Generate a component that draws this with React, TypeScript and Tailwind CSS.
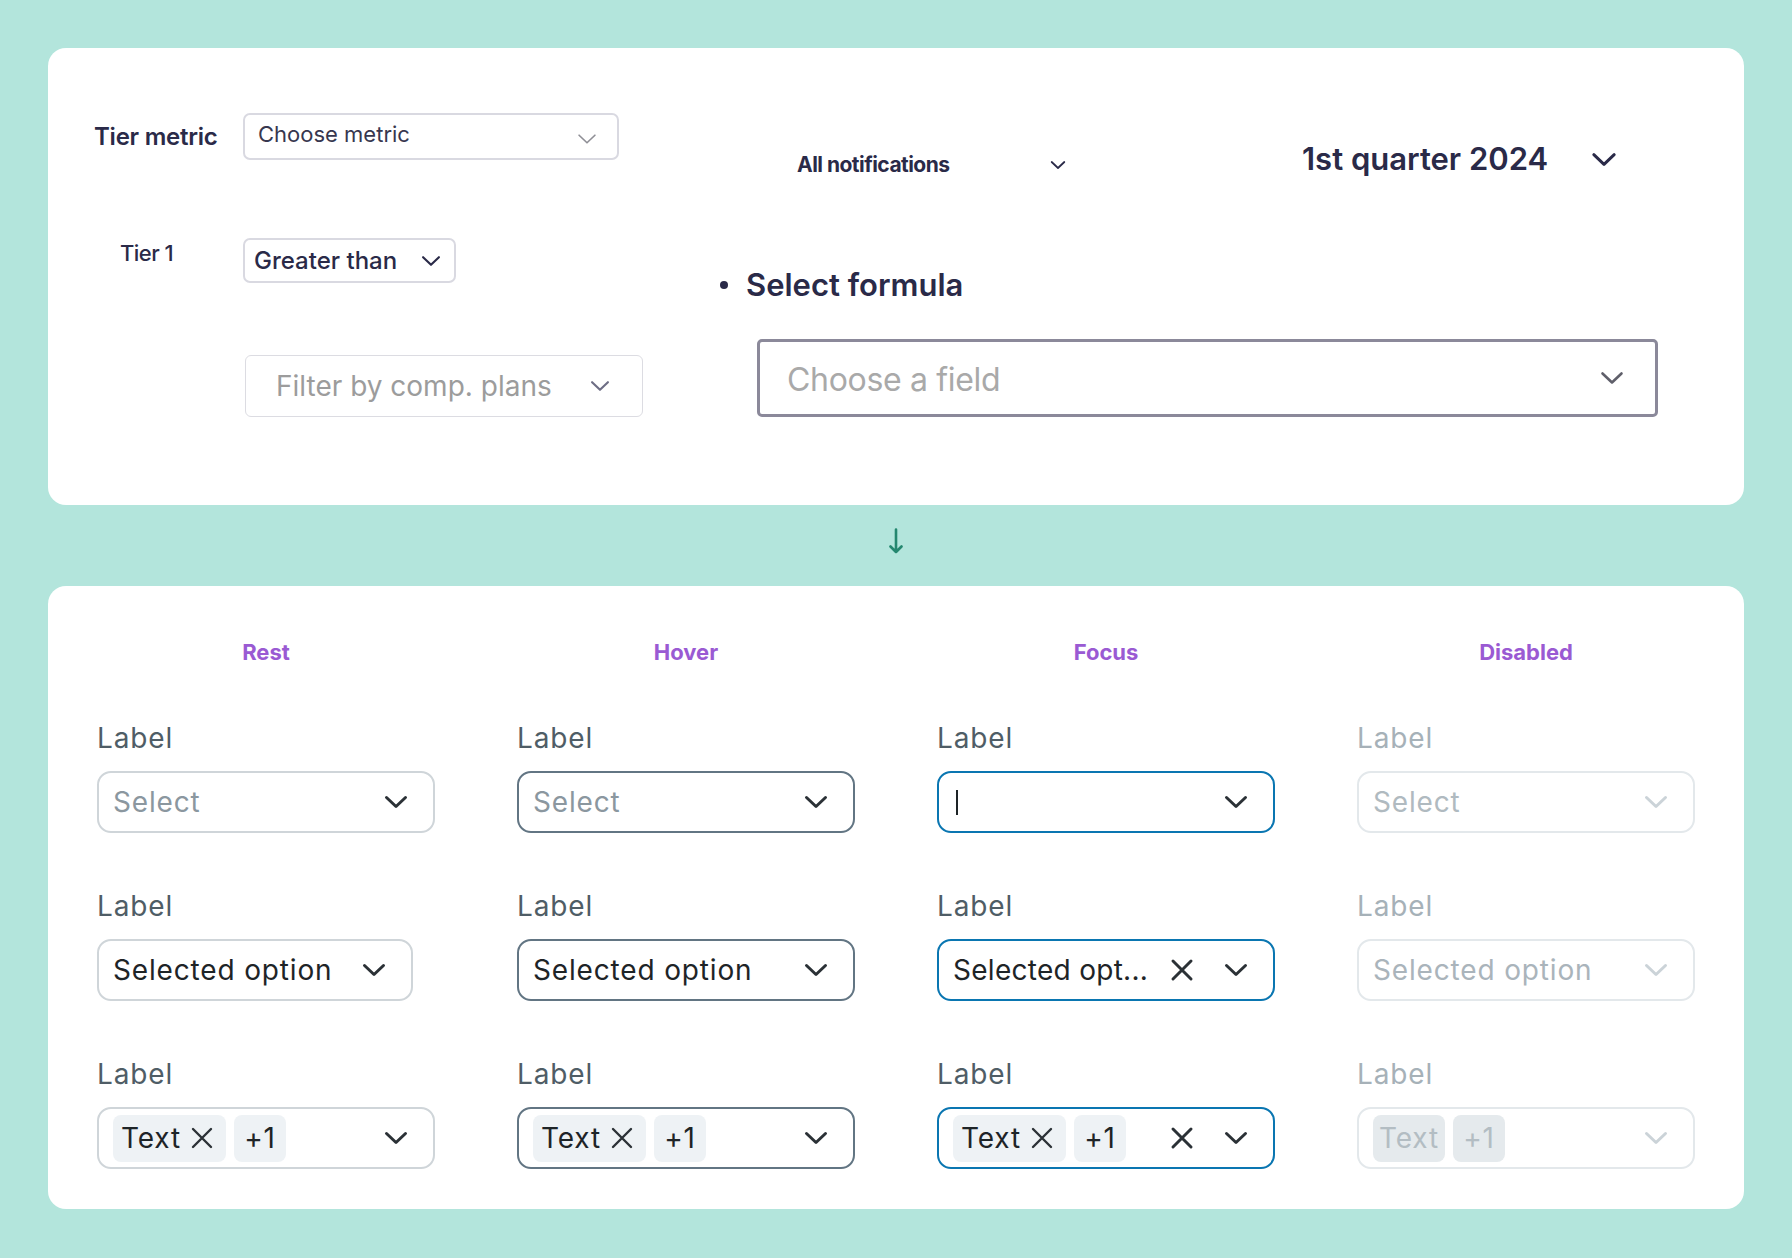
type State = 'rest' | 'hover' | 'focus' | 'disabled'

const STATES: { key: State; title: string }[] = [
  { key: 'rest', title: 'Rest' },
  { key: 'hover', title: 'Hover' },
  { key: 'focus', title: 'Focus' },
  { key: 'disabled', title: 'Disabled' },
]

function Chevron({
  w = 24,
  h = 14,
  sw = 3,
  className = '',
}: {
  w?: number
  h?: number
  sw?: number
  className?: string
}) {
  return (
    <svg width={w} height={h} viewBox="0 0 24 14" fill="none" className={className}>
      <path
        d="M2.5 2.5L12 11.5L21.5 2.5"
        stroke="currentColor"
        strokeWidth={sw}
        strokeLinecap="round"
        strokeLinejoin="round"
      />
    </svg>
  )
}

function Cross({ size = 24, sw = 3, className = '' }: { size?: number; sw?: number; className?: string }) {
  return (
    <svg width={size} height={size} viewBox="0 0 24 24" fill="none" className={className}>
      <path d="M3 3L21 21M21 3L3 21" stroke="currentColor" strokeWidth={sw} strokeLinecap="round" />
    </svg>
  )
}

const border: Record<State, string> = {
  rest: 'border-[#cfd5d9]',
  hover: 'border-[#627583]',
  focus: 'border-[#0a76b1]',
  disabled: 'border-[#e3e8eb]',
}

function Box({ state, width = 'w-[338px]', children }: { state: State; width?: string; children: React.ReactNode }) {
  return (
    <div className={`flex h-[62px] items-center rounded-[14px] border-2 bg-white pl-[14px] pr-[25px] ${width} ${border[state]}`}>
      {children}
    </div>
  )
}

function Field({ state, children }: { state: State; children: React.ReactNode }) {
  const dis = state === 'disabled'
  return (
    <div className="flex flex-col">
      <span className={`h-[32px] text-[28px] leading-[32px] tracking-[0.03em] ${dis ? 'text-[#a6b1b8]' : 'text-[#4f5d66]'}`}>
        Label
      </span>
      <div className="mt-[17px]">{children}</div>
    </div>
  )
}

function Arrow({ state }: { state: State }) {
  return <Chevron className={state === 'disabled' ? 'text-[#cbd3d8]' : 'text-[#2b3136]'} />
}

function EmptySelect({ state }: { state: State }) {
  return (
    <Box state={state}>
      <div className="flex flex-1 items-center">
        {state === 'focus' ? (
          <span className="ml-[3px] h-[25px] w-[2px] bg-[#1e2427]" />
        ) : (
          <span className={`text-[28px] tracking-[0.03em] ${state === 'disabled' ? 'text-[#b0bac0]' : 'text-[#8b979f]'}`}>
            Select
          </span>
        )}
      </div>
      <Arrow state={state} />
    </Box>
  )
}

function SingleSelect({ state }: { state: State }) {
  const dis = state === 'disabled'
  return (
    <Box state={state} width={state === 'rest' ? 'w-[316px]' : 'w-[338px]'}>
      <span
        className={`flex-1 text-[28px] ${state === 'focus' ? 'tracking-[0.01em]' : 'tracking-[0.03em]'} ${
          dis ? 'text-[#aab4bb]' : 'text-[#1e2427]'
        }`}
      >
        {state === 'focus' ? 'Selected opt...' : 'Selected option'}
      </span>
      {state === 'focus' && <Cross className="mr-[30px] text-[#2b3136]" />}
      <Arrow state={state} />
    </Box>
  )
}

function Chip({ children, dis, removable }: { children: React.ReactNode; dis: boolean; removable?: boolean }) {
  return (
    <div
      className={`flex h-[47px] items-center rounded-[8px] text-[28px] tracking-[0.03em] ${
        dis ? 'bg-[#e5eaed] text-[#b3bdc3]' : 'bg-[#eef2f5] text-[#1e2427]'
      } ${removable ? 'pl-[8px] pr-[12px]' : 'justify-center px-[6px]'}`}
    >
      {children}
      {removable && <Cross size={24} sw={2.4} className="ml-[9px] text-[#2b3136]" />}
    </div>
  )
}

function MultiSelect({ state }: { state: State }) {
  const dis = state === 'disabled'
  return (
    <Box state={state}>
      <div className="flex flex-1 items-center gap-[8px]">
        <Chip dis={dis} removable={!dis}>
          Text
        </Chip>
        <div className="w-[52px]">
          <Chip dis={dis}>+1</Chip>
        </div>
      </div>
      {state === 'focus' && <Cross className="mr-[30px] text-[#2b3136]" />}
      <Arrow state={state} />
    </Box>
  )
}

export default function App() {
  return (
    <div className="h-[1258px] bg-[#b3e5dc] px-[48px] pt-[48px] font-['Inter',sans-serif]">
      {/* top: legacy selects */}
      <div className="flex h-[457px] rounded-[18px] bg-white pl-[46px] pt-[65px] text-[#2a2a48]">
        <div className="flex w-[624px] flex-col">
          <div className="flex h-[47px] items-center">
            <span className="w-[149px] text-[24px] font-semibold tracking-[-0.01em]">Tier metric</span>
            <div className="flex h-[47px] w-[376px] items-center justify-between rounded-[7px] border-2 border-[#d9d9e1] pl-[13px] pr-[20px]">
              <span className="-mt-[4px] text-[22px] text-[#37374f]">Choose metric</span>
              <Chevron w={20} h={12} sw={2} className="mt-[4px] text-[#8f8f96]" />
            </div>
          </div>
          <div className="mt-[78px] flex">
            <span className="w-[149px] pl-[26px] text-[22px] font-medium leading-[30px] tracking-tight">Tier 1</span>
            <div className="flex h-[45px] w-[213px] items-center justify-between rounded-[7px] border-2 border-[#d9d9e1] pl-[9px] pr-[13px]">
              <span className="text-[24px] font-medium">Greater than</span>
              <Chevron w={20} h={12} sw={2.6} className="text-[#2a2a48]" />
            </div>
          </div>
          <div className="ml-[151px] mt-[72px] flex h-[62px] w-[398px] items-center justify-between rounded-[6px] border-[1.5px] border-[#dcdce2] pl-[30px] pr-[32px]">
            <span className="text-[28px] text-[#9c9c9c]">Filter by comp. plans</span>
            <Chevron w={20} h={12} sw={2.6} className="text-[#6e6e85]" />
          </div>
        </div>

        <div className="flex flex-1 flex-col">
          <div className="flex items-start">
            <div className="ml-[79px] mt-[37px] flex h-[30px] w-[269px] items-center justify-between">
              <span className="text-[21px] font-bold tracking-tight">All notifications</span>
              <Chevron w={16} h={10} sw={2.6} className="text-[#2a2a48]" />
            </div>
            <div className="ml-[236px] mt-[26px] flex h-[40px] items-center">
              <span className="text-[31px] font-semibold">1st quarter 2024</span>
              <Chevron w={26} h={15} sw={2.8} className="ml-[43px] text-[#2a2a48]" />
            </div>
          </div>
          <div className="mt-[85px] flex h-[40px] items-center">
            <span className="ml-[2px] h-[8px] w-[8px] rounded-full bg-[#2a2a48]" />
            <span className="ml-[18px] text-[31px] font-semibold">Select formula</span>
          </div>
          <div className="ml-[39px] mt-[34px] flex h-[78px] w-[901px] items-center justify-between rounded-[5px] border-[3px] border-[#8b899a] pl-[27px] pr-[31px]">
            <span className="mt-[4px] text-[32px] tracking-[-0.01em] text-[#a9a9a9]">Choose a field</span>
            <Chevron w={24} h={14} sw={2.6} className="text-[#5f5f6a]" />
          </div>
        </div>
      </div>

      <div className="flex h-[81px] justify-center pt-[23px]">
        <svg width="14" height="26" viewBox="0 0 14 26" fill="none" className="text-[#24876f]">
          <path d="M7 1.5V24M1.5 18.5L7 24L12.5 18.5" stroke="currentColor" strokeWidth="2.6" strokeLinecap="round" strokeLinejoin="round" />
        </svg>
      </div>

      {/* bottom: new select states */}
      <div className="h-[623px] rounded-[18px] bg-white pl-[49px] pt-[52px]">
        <div className="grid grid-cols-[repeat(4,338px)] gap-x-[82px]">
          {STATES.map((s) => (
            <div key={s.key} className="flex flex-col">
              <div className="h-[28px] text-center text-[22px] font-bold leading-[28px] text-[#9a5ad3]">{s.title}</div>
              <div className="mt-[56px] flex flex-col gap-[57px]">
                <Field state={s.key}>
                  <EmptySelect state={s.key} />
                </Field>
                <Field state={s.key}>
                  <SingleSelect state={s.key} />
                </Field>
                <Field state={s.key}>
                  <MultiSelect state={s.key} />
                </Field>
              </div>
            </div>
          ))}
        </div>
      </div>
    </div>
  )
}
